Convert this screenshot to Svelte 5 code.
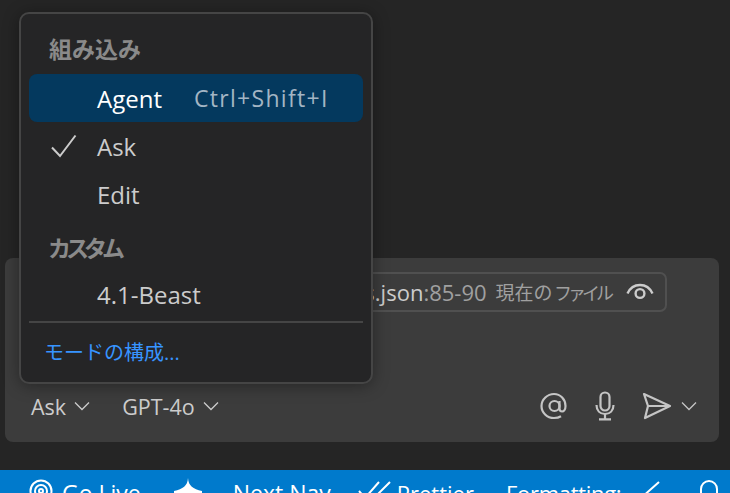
<script>
  const groups = [
    { title: '組み込み', items: [{ label: 'Agent', keys: 'Ctrl+Shift+I', active: true }, { label: 'Ask', checked: true }, { label: 'Edit' }] },
    { title: 'カスタム', narrow: true, items: [{ label: '4.1-Beast' }] }
  ];
</script>

<div class="page">
  <section class="card">
    <div class="context">
      <div class="chip">
        <span class="file">s.json</span><span class="range">:85-90</span>
        <span class="current">現在の <span class="kana">ファイル</span></span>
        <svg class="eye" width="28" height="20" viewBox="0 0 28 20" fill="none" stroke="currentColor" stroke-width="2.4">
          <path d="M1.5 11.5C4 6 8.5 3 14 3s10 3 12.5 8.5" />
          <circle cx="14" cy="11.5" r="4.4" />
        </svg>
      </div>
    </div>
    <div class="toolbar">
      <div class="pickers">
        <span class="picker">Ask
          <svg class="chev" width="16" height="10" viewBox="0 0 16 10" fill="none" stroke="currentColor" stroke-width="1.3"><path d="M1 1.5l7 7 7-7" /></svg>
        </span>
        <span class="picker">GPT-4o
          <svg class="chev" width="16" height="10" viewBox="0 0 16 10" fill="none" stroke="currentColor" stroke-width="1.3"><path d="M1 1.5l7 7 7-7" /></svg>
        </span>
      </div>
      <div class="actions">
        <svg class="at" width="28" height="28" viewBox="0 0 28 28" fill="none" stroke="currentColor" stroke-width="2.2">
          <circle cx="14.5" cy="14" r="5" />
          <path d="M19.5 9v7.5c0 2 1 3 2.6 3s3.4-2 3.4-5.5C25.5 7.5 20.5 2 14 2S1.500 7.5 1.500 14 7 26 14 26c3 0 5-.5 7-1.700" />
        </svg>
        <svg class="mic" width="20" height="30" viewBox="0 0 20 30" fill="none" stroke="currentColor" stroke-width="2.2">
          <rect x="5.500" y="1.500" width="9" height="18" rx="4.500" />
          <path d="M1.500 14c0 5.500 3.500 9 8.500 9s8.500-3.500 8.500-9M10 23v5M4 28.300h12" />
        </svg>
        <svg class="send" width="30" height="28" viewBox="0 0 30 28" fill="none" stroke="currentColor" stroke-width="2.200" stroke-linejoin="round">
          <path d="M2 2l26 12L3 26l3-12zM6 14h22" />
        </svg>
        <svg class="chev" width="16" height="10" viewBox="0 0 16 10" fill="none" stroke="currentColor" stroke-width="1.300"><path d="M1 1.500l7 7 7-7" /></svg>
      </div>
    </div>
  </section>

  <footer class="status">
    <span class="s golive">
      <svg width="24" height="30" viewBox="0 0 24 30" fill="none" stroke="currentColor" stroke-width="2">
        <circle cx="12" cy="12" r="10.500" />
        <circle cx="12" cy="12" r="6" />
        <circle cx="12" cy="12" r="2" />
      </svg>
      Go Live
    </span>
    <svg class="spark" width="30" height="16" viewBox="0 0 30 16"><path fill="currentColor" d="M15 0C15.500 8 20 11 29 13V16H1v-3C10 11 14.500 8 15 0z" /></svg>
    <span class="s nav">Next Nav</span>
    <span class="s prettier">
      <svg width="34" height="18" viewBox="0 0 34 18" fill="none" stroke="currentColor" stroke-width="2"><path d="M1 10l6 7L21 1M12 13l4 4L32 1" /></svg>
      Prettier
    </span>
    <span class="s fmt">Formatting:
      <svg width="26" height="18" viewBox="0 0 26 18" fill="none" stroke="currentColor" stroke-width="2"><path d="M2 13l4 4L24 1" /></svg>
    </span>
    <svg class="bell" width="22" height="24" viewBox="0 0 22 24" fill="none" stroke="currentColor" stroke-width="2"><path d="M3 22V10a8 8 0 0 1 16 0v12" /></svg>
  </footer>

  <div class="menu">
    {#each groups as group}
      <div class="heading" class:narrow={group.narrow}>{group.title}</div>
      {#each group.items as item}
        <div class="item" class:active={item.active}>
          <span class="tick">
            {#if item.checked}
              <svg width="28" height="24" viewBox="0 0 28 24" fill="none" stroke="currentColor" stroke-width="2"><path d="M2 13.500l8 8.500L25.500 1.500" /></svg>
            {/if}
          </span>
          <span class="label">{item.label}</span>
          {#if item.keys}<span class="keys">{item.keys}</span>{/if}
        </div>
      {/each}
    {/each}
    <hr />
    <div class="config">モードの構成...</div>
  </div>
</div>

<style>
  :global(body) {
    margin: 0;
    background: #252525;
  }

  .page {
    position: relative;
    display: flex;
    flex-direction: column;
    height: 493px;
    overflow: hidden;
    font-family: "Open Sans", "Noto Sans CJK JP", sans-serif;
    color: #cccccc;
  }

  .card {
    display: flex;
    flex-direction: column;
    justify-content: space-between;
    height: 184px;
    box-sizing: border-box;
    margin: 258px 11px 28px 5px;
    padding: 14px 22px 20px 26px;
    background: #3c3c3c;
    border-radius: 8px;
  }

  .context {
    display: flex;
    justify-content: flex-end;
    padding-right: 30px;
  }

  .chip {
    display: flex;
    align-items: center;
    height: 40px;
    box-sizing: border-box;
    padding: 0 11px 0 40px;
    border: 2px solid #505050;
    border-radius: 7px;
    font-size: 22px;
    white-space: nowrap;
  }

  .file { color: #cccccc; }
  .range { color: #a0a0a0; }

  .current {
    margin: 0 16px 0 9px;
    font-size: 19px;
    word-spacing: -3.5px;
    color: #a0a0a0;
  }

  .kana {
    font-size: 18px;
    letter-spacing: -4px;
  }

  .eye { color: #cccccc; }

  .toolbar {
    display: flex;
    align-items: center;
    justify-content: space-between;
    height: 32px;
  }

  .pickers {
    display: flex;
    gap: 32px;
    font-size: 21.5px;
  }

  .picker {
    display: flex;
    align-items: center;
    gap: 8px;
  }

  .actions {
    display: flex;
    align-items: center;
    color: #c5c5c5;
  }

  .mic { margin-left: 27px; }
  .send { margin-left: 27px; }
  .actions .chev { margin-left: 9px; }

  .status {
    display: flex;
    align-items: flex-start;
    height: 23px;
    overflow: hidden;
    background: #007acc;
    color: #ffffff;
    font-size: 23px;
  }

  .s {
    display: flex;
    align-items: flex-start;
    gap: 9px;
    line-height: 46px;
    white-space: nowrap;
    flex: none;
  }

  .s svg { margin-top: 11px; flex: none; }
  .golive svg { margin-top: 9px; }

  .golive { margin-left: 29px; }
  .spark { margin: 8px 0 0 32px; flex: none; }
  .nav { margin-left: 30px; }
  .prettier { margin-left: 27px; gap: 5px; font-size: 22px; }
  .fmt { margin-left: 32px; gap: 14px; font-size: 22px; letter-spacing: -0.3px; }
  .bell { margin: 9px 10px 0 auto; flex: none; }

  .menu {
    position: absolute;
    left: 19px;
    top: 12px;
    width: 354px;
    height: 372px;
    box-sizing: border-box;
    padding: 0 8px;
    background: #252526;
    border: 2px solid #454545;
    border-radius: 10px;
    box-shadow: 0 2px 16px rgba(0, 0, 0, 0.36);
  }

  .heading {
    display: flex;
    align-items: center;
    box-sizing: border-box;
    height: 60px;
    padding: 8px 0 0 20px;
    font-size: 23px;
    font-weight: 700;
    color: #8a8a8a;
  }

  .heading.narrow {
    height: 52px;
    padding: 6px 0 0 19px;
    letter-spacing: -5px;
  }

  .item {
    display: flex;
    align-items: center;
    height: 48px;
    border-radius: 8px;
    font-size: 24px;
    white-space: nowrap;
  }

  .item.active {
    background: #04395e;
    color: #ffffff;
  }

  .tick {
    display: flex;
    width: 68px;
    box-sizing: border-box;
    padding-left: 21px;
    flex: none;
  }

  .keys {
    margin-left: 32px;
    font-size: 23px;
    letter-spacing: 1.3px;
    color: #a3b5c4;
  }

  hr {
    height: 2px;
    margin: 3px 0 0;
    border: 0;
    background: #454545;
  }

  .config {
    display: flex;
    align-items: center;
    box-sizing: border-box;
    height: 58px;
    padding: 0 0 2px 15px;
    font-size: 20px;
    color: #3794ff;
  }
</style>
